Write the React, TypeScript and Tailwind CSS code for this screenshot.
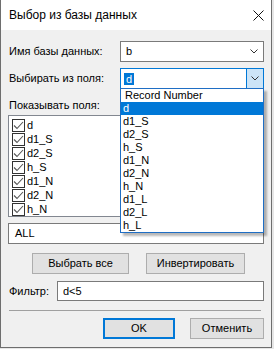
import React from "react";

const Chevron = () => (
  <svg width="8" height="5" viewBox="0 0 8 5">
    <path d="M0.5 0.5 L4 4 L7.5 0.5" fill="none" stroke="#333" strokeWidth="1" />
  </svg>
);

const CheckBox = () => (
  <svg width="13" height="13" viewBox="0 0 13 13" className="shrink-0">
    <rect x="0.5" y="0.5" width="12" height="12" fill="white" stroke="#333" />
    <path d="M2 6.5 L5 9.5 L11 3" fill="none" stroke="#555" strokeWidth="1.1" />
  </svg>
);

const fields = ["d", "d1_S", "d2_S", "h_S", "d1_N", "d2_N", "h_N", "d1_L", "d2_L", "h_L"];
const shown = ["d", "d1_S", "d2_S", "h_S", "d1_N", "d2_N", "h_N"];

export default function App() {
  return (
    <div className="w-[274px] h-[349px] bg-[#e6e6e6] font-['Liberation_Sans',Arial,sans-serif] text-[11px] text-black">
      <div className="w-[272px] h-[348px] border-l border-r border-b border-[#6e6e6e] bg-[#f0f0f0] flex flex-col">
        {/* Title bar */}
        <div className="h-[30px] bg-white flex items-center justify-between pl-[8px] pr-[7px] shrink-0">
          <span className="text-[12px]">Выбор из базы данных</span>
          <svg width="11" height="11" viewBox="0 0 11 11">
            <path d="M0.5 0.5 L10.5 10.5 M10.5 0.5 L0.5 10.5" stroke="#111" strokeWidth="1" />
          </svg>
        </div>

        <div className="px-[7px] flex flex-col">
          {/* Row 1 */}
          <div className="flex items-center mt-[11px]">
            <div className="w-[112px] pl-[1px]">Имя базы данных:</div>
            <div className="w-[144px] h-[21px] border border-[#7a7a7a] bg-white flex items-center justify-between pl-[5px] pr-[5px]">
              <span>b</span>
              <Chevron />
            </div>
          </div>

          {/* Row 2 */}
          <div className="flex items-center mt-[6px] relative z-10">
            <div className="w-[112px] pl-[1px]">Выбирать из поля:</div>
            <div className="w-[144px] h-[21px] border border-[#0078d7] bg-white flex items-stretch relative">
              <div className="flex-1 flex items-center pl-[3px]">
                <span className="bg-[#0078d7] text-white px-[2px] leading-[12px]">d</span>
              </div>
              <div className="w-[17px] bg-[#cce4f7] border-l border-[#0078d7] flex items-center justify-center">
                <Chevron />
              </div>
              {/* Dropdown list */}
              <div className="absolute top-full left-[-1px] w-[144px] border border-[#1f6ec4] bg-white shadow-[3px_3px_2px_rgba(0,0,0,0.28)]">
                <div className="h-[13px] leading-[13px] pl-[4px]">Record Number</div>
                {fields.map((f) => (
                  <div
                    key={f}
                    className={
                      f === "d"
                        ? "h-[13px] leading-[13px] pl-[2px] bg-[#0078d7] text-white"
                        : "h-[13px] leading-[13px] pl-[2px]"
                    }
                  >
                    {f}
                  </div>
                ))}
              </div>
            </div>
          </div>

          {/* Show fields label */}
          <div className="mt-[10px] leading-[13px] pl-[1px]">Показывать поля:</div>
          <div className="mt-[3px] h-[102px] border border-[#828790] bg-white overflow-hidden pt-[2px]">
            {shown.map((f) => (
              <div key={f} className="h-[14px] flex items-center pl-[3px] gap-[2px]">
                <CheckBox />
                <span>{f}</span>
              </div>
            ))}
          </div>

          {/* ALL box */}
          <div className="mt-[6px] h-[21px] border border-[#7a7a7a] bg-white flex items-center pl-[6px]">ALL</div>

          {/* Buttons */}
          <div className="mt-[9px] flex">
            <button className="ml-[24px] w-[97px] h-[21px] bg-[#e1e1e1] border border-[#adadad]">Выбрать все</button>
            <button className="ml-[17px] w-[99px] h-[21px] bg-[#e1e1e1] border border-[#adadad]">Инвертировать</button>
          </div>

          {/* Filter */}
          <div className="mt-[7px] flex items-center">
            <div className="w-[49px] pl-[1px]">Фильтр:</div>
            <div className="flex-1 h-[20px] border border-[#7a7a7a] bg-white flex items-center pl-[5px]">d&lt;5</div>
          </div>

          {/* Separator */}
          <div className="mt-[9px] h-px bg-[#a0a0a0] ml-[1px] mr-[3px]" />

          {/* OK / Cancel */}
          <div className="mt-[7px] flex justify-end gap-[15px]">
            <button className="w-[72px] h-[21px] bg-[#e1e1e1] border-2 border-[#0078d7]">OK</button>
            <button className="w-[74px] h-[21px] bg-[#e1e1e1] border border-[#adadad]">Отменить</button>
          </div>
        </div>
      </div>
    </div>
  );
}
